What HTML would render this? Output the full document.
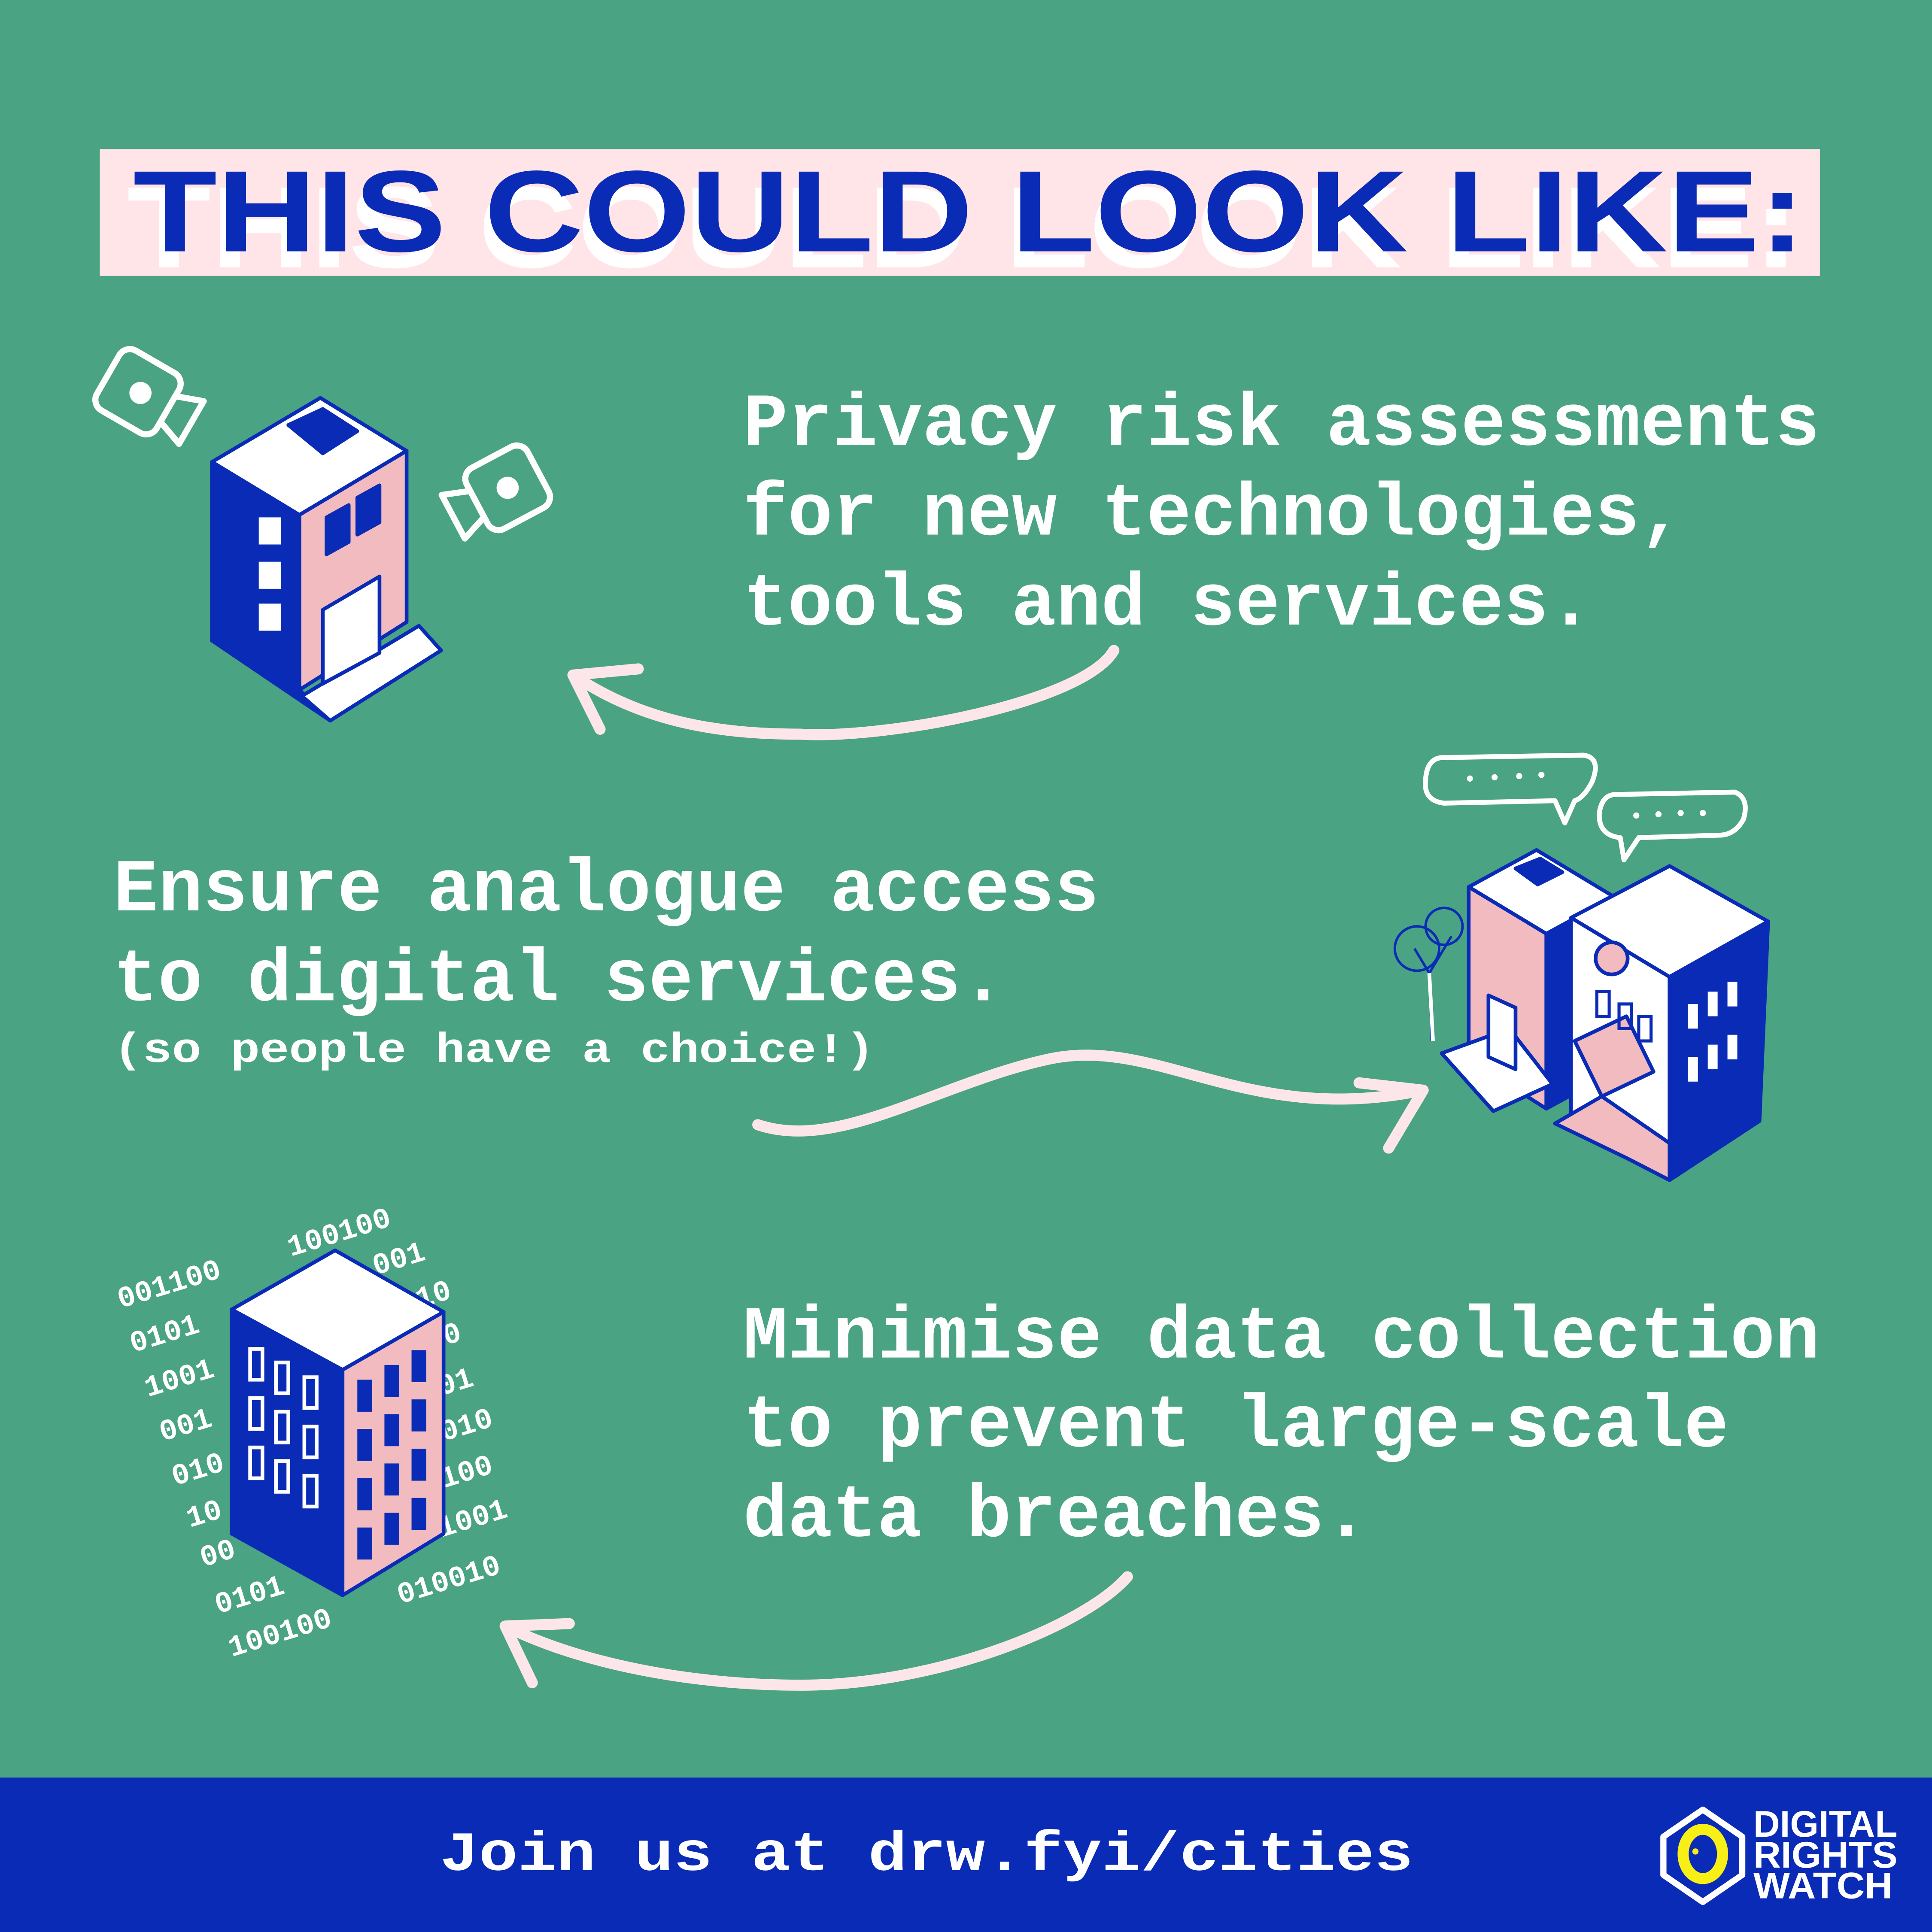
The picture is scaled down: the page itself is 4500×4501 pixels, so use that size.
<!DOCTYPE html>
<html><head><meta charset="utf-8">
<style>
html,body{margin:0;padding:0;}
body{width:4500px;height:4501px;overflow:hidden;background:#4aa383;}
svg{display:block;}
</style></head>
<body>
<svg width="4500" height="4501" viewBox="0 0 1568 1568.35" xmlns="http://www.w3.org/2000/svg">
<rect width="1568" height="1569" fill="#4aa383"/>
<!-- title -->
<rect x="81" y="121" width="1396" height="103" fill="#ffe4e8"/>
<g font-family="Liberation Sans, Arial, sans-serif" font-weight="bold" font-size="94" textLength="1357">
<text x="103" y="217" fill="#fff" textLength="1357" lengthAdjust="spacingAndGlyphs">THIS COULD LOOK LIKE:</text>
<text x="108" y="204" fill="#0a2bb5" textLength="1357" lengthAdjust="spacingAndGlyphs">THIS COULD LOOK LIKE:</text>
</g>
<!-- body text -->
<g font-family="Liberation Mono, monospace" font-weight="bold" fill="#fff" font-size="60.6">
<text x="603" y="361" textLength="874" lengthAdjust="spacingAndGlyphs">Privacy risk assessments</text>
<text x="603" y="434" textLength="764" lengthAdjust="spacingAndGlyphs">for new technologies,</text>
<text x="603" y="507" textLength="690" lengthAdjust="spacingAndGlyphs">tools and services.</text>
<text x="92" y="739" textLength="800" lengthAdjust="spacingAndGlyphs">Ensure analogue access</text>
<text x="92" y="812" textLength="724" lengthAdjust="spacingAndGlyphs">to digital services.</text>
<text x="603" y="1102" textLength="874" lengthAdjust="spacingAndGlyphs">Minimise data collection</text>
<text x="603" y="1174" textLength="800" lengthAdjust="spacingAndGlyphs">to prevent large-scale</text>
<text x="603" y="1247" textLength="508" lengthAdjust="spacingAndGlyphs">data breaches.</text>
<text x="92" y="862" font-size="34" textLength="618" lengthAdjust="spacingAndGlyphs">(so people have a choice!)</text>
</g>
<!-- arrows -->
<g fill="none" stroke="#fde6ea" stroke-width="9" stroke-linecap="round">
<path d="M904,528 C880,570 720,600 650,596 C580,596 520,585 465,548"/>
<path d="M465,548 L518,543 M465,548 L487,592"/>
<path d="M615,913 C680,935 760,880 850,860 C940,840 1010,915 1155,885"/>
<path d="M1155,885 L1103,879 M1155,885 L1127,932"/>
<path d="M915,1280 C880,1320 760,1368 650,1368 C560,1368 470,1350 410,1320"/>
<path d="M410,1320 L462,1318 M410,1320 L432,1366"/>
</g>
<!-- cameras -->
<g fill="none" stroke="#fff" stroke-width="5" stroke-linejoin="round">
<g transform="translate(112,318) rotate(30)"><rect x="-28" y="-28" width="56" height="56" rx="10"/><path d="M28,-12 L50,-20 L50,20 L28,12"/></g>
<g transform="translate(412,396) rotate(-28)"><rect x="-28" y="-28" width="56" height="56" rx="10"/><path d="M-28,-12 L-50,-20 L-50,20 L-28,12"/></g>
</g>
<circle cx="114" cy="319" r="9" fill="#fff"/><circle cx="412" cy="396" r="9" fill="#fff"/>
<!-- building 1 -->
<g stroke="#0a2bb5" stroke-width="3" stroke-linejoin="round">
<polygon points="172,375 260,323 330,366 243,418" fill="#fff"/>
<polygon points="234,345 262,332 290,350 262,368" fill="#0a2bb5"/>
<polygon points="172,375 243,418 243,560 268,585 172,520" fill="#0a2bb5"/>
<polygon points="243,418 330,366 330,505 243,560" fill="#f2bbc0"/>
<polygon points="245,565 340,508 358,528 268,585" fill="#fff"/>
<polygon points="262,495 308,468 308,530 262,555" fill="#fff"/>
<polygon points="265,420 283,410 283,440 265,450" fill="#0a2bb5"/>
<polygon points="290,404 308,394 308,424 290,434" fill="#0a2bb5"/>
</g>
<g fill="#fff"><rect x="210" y="420" width="18" height="22"/><rect x="210" y="456" width="18" height="22"/><rect x="210" y="490" width="18" height="22"/></g>
<!-- speech bubbles -->
<g fill="none" stroke="#fff" stroke-width="4" stroke-linejoin="round">
<path d="M1170,615 L1285,613 Q1300,615 1292,635 Q1285,648 1278,650 L1270,668 L1262,650 L1172,652 Q1155,650 1157,633 Q1158,616 1170,615Z"/>
<path d="M1310,645 L1408,643 Q1420,648 1415,665 Q1408,678 1395,678 L1330,680 L1318,698 L1315,680 Q1297,678 1298,660 Q1300,646 1310,645Z"/>
</g>
<g fill="#fff"><circle cx="1193" cy="632" r="2.5"/><circle cx="1213" cy="631" r="2.5"/><circle cx="1233" cy="630" r="2.5"/><circle cx="1251" cy="629" r="2.5"/><circle cx="1328" cy="662" r="2.5"/><circle cx="1346" cy="661" r="2.5"/><circle cx="1364" cy="660" r="2.5"/><circle cx="1382" cy="660" r="2.5"/></g>
<!-- tree -->
<g fill="none" stroke="#0a2bb5" stroke-width="2"><path d="M1162,845 L1160,790 L1148,770 M1160,790 L1178,760"/><circle cx="1150" cy="770" r="18"/><circle cx="1172" cy="752" r="15"/></g>
<line x1="1163" y1="845" x2="1160" y2="790" stroke="#fff" stroke-width="3"/>
<!-- building 2 group -->
<g stroke="#0a2bb5" stroke-width="3" stroke-linejoin="round">
<polygon points="1192,720 1247,690 1310,728 1255,758" fill="#fff"/>
<polygon points="1230,705 1250,697 1268,708 1248,718" fill="#0a2bb5"/>
<polygon points="1192,720 1255,758 1255,900 1192,860" fill="#f2bbc0"/>
<polygon points="1255,758 1310,728 1310,870 1255,900" fill="#0a2bb5"/>
<polygon points="1170,855 1225,835 1260,880 1212,902" fill="#fff"/>
<polygon points="1208,808 1230,818 1230,868 1208,858" fill="#fff"/>
<polygon points="1275,745 1355,703 1435,748 1355,793" fill="#fff"/>
<polygon points="1275,745 1355,793 1355,958 1275,910" fill="#fff"/>
<polygon points="1355,793 1435,748 1428,910 1355,958" fill="#0a2bb5"/>
<polygon points="1262,912 1300,890 1355,928 1355,958 1320,940" fill="#f2bbc0"/>
<polygon points="1278,845 1320,825 1342,870 1300,890" fill="#f2bbc0"/>
<circle cx="1308" cy="778" r="13" fill="#f2bbc0"/>
</g>
<g fill="#fff"><rect x="1370" y="815" width="8" height="20"/><rect x="1386" y="805" width="8" height="20"/><rect x="1402" y="797" width="8" height="20"/><rect x="1370" y="858" width="8" height="20"/><rect x="1386" y="848" width="8" height="20"/><rect x="1402" y="840" width="8" height="20"/></g>
<g fill="none" stroke="#0a2bb5" stroke-width="2.5"><rect x="1296" y="805" width="10" height="20"/><rect x="1314" y="815" width="10" height="20"/><rect x="1330" y="825" width="10" height="20"/></g>
<!-- binary -->
<g font-family="Liberation Mono, monospace" font-weight="bold" fill="#fff" font-size="24">
<text transform="translate(98,1062) rotate(-17)">001100</text>
<text transform="translate(236,1020) rotate(-17)">100100</text>
<text transform="translate(108,1098) rotate(-17)">0101</text>
<text transform="translate(120,1134) rotate(-17)">1001</text>
<text transform="translate(132,1170) rotate(-17)">001</text>
<text transform="translate(142,1206) rotate(-17)">010</text>
<text transform="translate(154,1240) rotate(-17)">10</text>
<text transform="translate(165,1272) rotate(-17)">00</text>
<text transform="translate(177,1310) rotate(-17)">0101</text>
<text transform="translate(188,1345) rotate(-17)">100100</text>
<text transform="translate(325,1302) rotate(-17)">010010</text>
<text transform="translate(305,1035) rotate(-17)">001</text>
<text transform="translate(340,1062) rotate(-17)">10</text>
<text transform="translate(362,1092) rotate(-17)">0</text>
<text transform="translate(358,1133) rotate(-17)">01</text>
<text transform="translate(360,1170) rotate(-17)">010</text>
<text transform="translate(360,1208) rotate(-17)">100</text>
<text transform="translate(358,1248) rotate(-17)">1001</text>
</g>
<!-- building 3 -->
<g stroke="#0a2bb5" stroke-width="3" stroke-linejoin="round">
<polygon points="188,1063 272,1015 360,1065 278,1112" fill="#fff"/>
<polygon points="188,1063 278,1112 278,1295 188,1245" fill="#0a2bb5"/>
<polygon points="278,1112 360,1065 360,1245 278,1295" fill="#f2bbc0"/>
</g>
<g fill="none" stroke="#fff" stroke-width="3">
<rect x="203" y="1095" width="10" height="25"/><rect x="224" y="1106" width="10" height="25"/><rect x="247" y="1118" width="10" height="25"/>
<rect x="203" y="1135" width="10" height="25"/><rect x="224" y="1146" width="10" height="25"/><rect x="247" y="1158" width="10" height="25"/>
<rect x="203" y="1175" width="10" height="25"/><rect x="224" y="1186" width="10" height="25"/><rect x="247" y="1198" width="10" height="25"/>
</g>
<g fill="#0a2bb5">
<rect x="290" y="1120" width="12" height="26"/><rect x="312" y="1108" width="12" height="26"/><rect x="334" y="1096" width="12" height="26"/>
<rect x="290" y="1160" width="12" height="26"/><rect x="312" y="1148" width="12" height="26"/><rect x="334" y="1136" width="12" height="26"/>
<rect x="290" y="1200" width="12" height="26"/><rect x="312" y="1188" width="12" height="26"/><rect x="334" y="1176" width="12" height="26"/>
<rect x="290" y="1240" width="12" height="26"/><rect x="312" y="1228" width="12" height="26"/><rect x="334" y="1216" width="12" height="26"/>
</g>
<!-- footer -->
<rect x="0" y="1443" width="1568" height="126" fill="#0a2bb5"/>
<text x="357" y="1518" font-family="Liberation Mono, monospace" font-weight="bold" font-size="45" fill="#fff" textLength="790" lengthAdjust="spacingAndGlyphs">Join us at drw.fyi/cities</text>
<polygon points="1382,1469 1414,1491 1414,1522 1382,1544 1350,1522 1350,1491" fill="none" stroke="#fff" stroke-width="5" stroke-linejoin="round"/>
<ellipse cx="1382" cy="1505" rx="16" ry="20" fill="none" stroke="#f8ef17" stroke-width="9"/>
<circle cx="1376" cy="1503" r="2.5" fill="#f8ef17"/>
<g font-family="Liberation Sans, Arial, sans-serif" font-weight="bold" fill="#fff" font-size="30">
<text x="1423" y="1491" textLength="117" lengthAdjust="spacingAndGlyphs">DIGITAL</text>
<text x="1423" y="1516" textLength="117" lengthAdjust="spacingAndGlyphs">RIGHTS</text>
<text x="1423" y="1541" textLength="113" lengthAdjust="spacingAndGlyphs">WATCH</text>
</g>
</svg>
</body></html>
